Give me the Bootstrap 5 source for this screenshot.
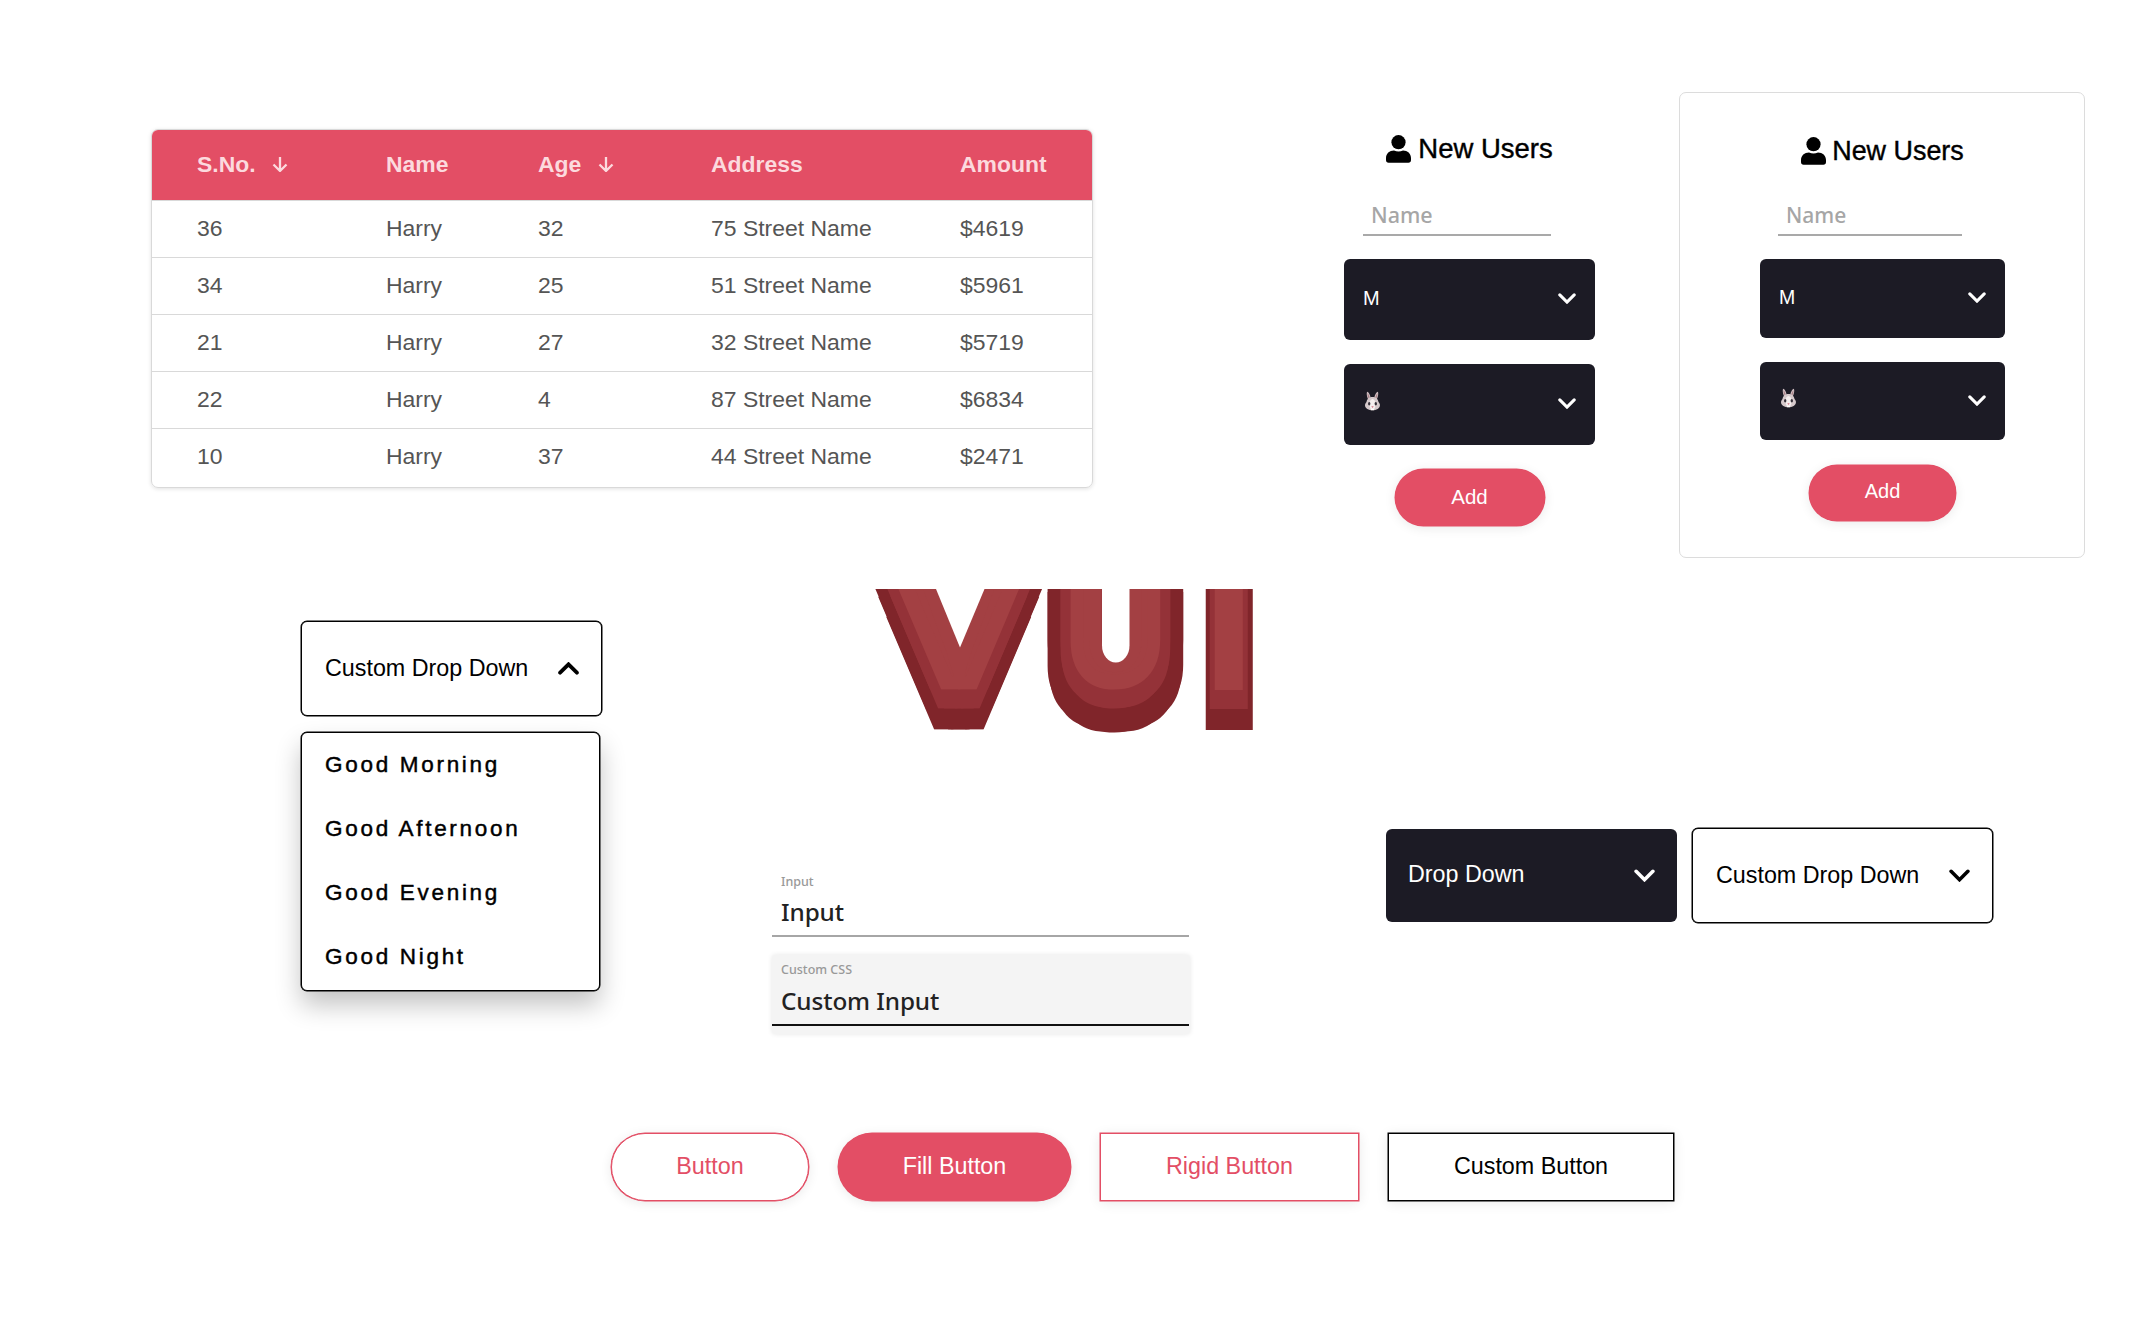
<!DOCTYPE html>
<html lang="en">
<head>
<meta charset="utf-8">
<meta name="viewport" content="width=device-width, initial-scale=1">
<title>VUI components</title>
<link href="https://cdn.jsdelivr.net/npm/bootstrap@5.3.0/dist/css/bootstrap.min.css" rel="stylesheet">
<style>
  :root { --rose: #e34e65; --ink: #1c1b25; }
  body { background: #fff; color: #000; font: 23.3px/1.2 "Liberation Sans", Arial, sans-serif; overflow: hidden; }
  .showcase { width: 2136px; height: 1320px; overflow: hidden; }
  .band-top { height: 589px; }
  .band-mid { height: 544px; }

  /* data table */
  .grid-box { width: 942px; height: 359px; margin: 129px 0 0 151px; border: 1px solid #d9d9d9; border-radius: 7px; box-shadow: 0 1px 4px rgba(0,0,0,.12); }
  .vui-table { --bs-table-bg: transparent; --bs-table-color: #555; table-layout: fixed; font-size: 22.95px; line-height: 27px; }
  .vui-table > :not(caption) > * > * { padding: 0 0 1px; height: 57px; border-bottom: 1px solid #d9d9d9; vertical-align: middle; color: #555; }
  .vui-table > thead > tr > th { height: 70px; background: var(--rose); color: #fcdade; border-bottom-width: 1px; }
  .vui-table > tbody > tr:last-child > td { border-bottom: 0; }
  .vui-table > :not(caption) > * > :first-child { padding-left: 45px; }
  .vui-table svg { margin: -3px 0 0 10px; }

  /* new user form */
  .user-form { width: 251px; margin: 132px 0 0 251px; }
  .user-title { font-size: 27.5px; line-height: 34px; -webkit-text-stroke: .4px #000; margin-bottom: 36px; gap: 7px; }
  .user-name { width: 188px; height: 34px; margin: 0 0 23px 19px; padding: 0 0 7px 8px; border: 0; border-bottom: 2px solid #a9a9a9; border-radius: 0; font: 500 21.5px/25px "Noto Sans", sans-serif; color: #a6a6a6; background: none; }
  .user-name::placeholder { color: #a6a6a6; opacity: 1; }
  .pick { height: 80.5px; background: var(--ink); color: #fff; border: 0; border-radius: 6px; padding: 0 19px 2px; font-size: 20px; line-height: 24px; margin-bottom: 24.5px; }
  .pick svg.rabbit { margin: -4px 0 0 1px; }
  .form-panel { width: 406px; height: 466px; margin: 92px 0 0 84px; border: 1px solid #dcdcdc; border-radius: 7px; padding: 41px 79px 0 80px; }
  .form-panel .user-form { width: 245px; margin: 0; }
  .form-panel .user-title { font-size: 26.9px; margin-bottom: 34px; gap: 6px; }
  .form-panel .user-name { width: 184px; margin-left: 18px; font-size: 21px; }
  .form-panel .pick { height: 78.5px; font-size: 19.5px; margin-bottom: 24.300px; }

  /* buttons */
  .vbtn { --bs-btn-font-size: 23.3px; --bs-btn-border-radius: 0; --bs-btn-bg: #fff; height: 68px; padding: 0 0 1px; box-shadow: 0 0 0 .5px var(--bs-btn-border-color), 0 2px 12px rgba(0,0,0,.09); --bs-btn-color: var(--rose); --bs-btn-border-color: var(--rose); --bs-btn-border-width: 1px; font-family: inherit; }
  .vbtn.filled { --bs-btn-bg: var(--rose); --bs-btn-color: #fff; }
  .vbtn.dark-line { --bs-btn-color: #000; --bs-btn-border-color: #000; }
  .vbtn.add-btn { width: 150px; height: 57px; font-size: 20.5px; padding: 0 0 1px; }
  .form-panel .vbtn.add-btn { width: 147px; height: 56px; font-size: 20px; padding-bottom: 3px; }
  .btn-strip { padding-left: 611px; gap: 29px; }

  /* dropdowns */
  .select-box { height: 95px; border: 1px solid #000; box-shadow: 0 0 0 .5px #000; border-radius: 6px; background: #fff; padding: 0 22px 0 23px; color: #000; font-size: 23.3px; }
  .select-box.solid { height: 93px; background: var(--ink); border: 0; box-shadow: none; color: #fff; padding: 0 22px 1px; }
  .select-col { width: 301px; margin: 32px 0 0 301px; }
  .select-menu { width: 299px; height: 259px; margin-top: 16px; border: 1px solid #000; border-radius: 6px; background: #fff; box-shadow: 0 0 0 .5px #000, 0 14px 26px rgba(0,0,0,.24); }
  .select-menu li { height: 64px; line-height: 63px; padding-left: 23px; font-size: 22.5px; letter-spacing: 2.7px; -webkit-text-stroke: .45px #000; }

  /* wordmark and inputs */
  .mid-col { width: 420px; margin-left: 170px; }
  .wordmark { overflow: visible; margin: -60px 0 135px 100px; font: bold 100px "Liberation Sans", Arial, sans-serif; text-anchor: middle; }
  .wordmark text { vector-effect: non-scaling-stroke; stroke-linejoin: miter; stroke-miterlimit: 10; fill: #a34043; stroke: #a34043; }
  .field { width: 417px; height: 68px; border-bottom: 2px solid #a6a6a6; padding: 3px 0 0 9px; font-family: "Noto Sans", sans-serif; color: #222; }
  .field-label { font-size: 12.5px; line-height: 20px; color: #999; font-weight: 500; }
  .field-value { font: 500 24.3px/32px "Noto Sans", sans-serif; margin-top: 4px; letter-spacing: -.1px; color: #222; }
  .field-wrap { width: 418px; height: 79px; margin-top: 18px; background: #f4f4f4; border-radius: 3px; box-shadow: 0 0 5px rgba(0,0,0,.1); }
  .field-wrap .field { height: 71px; padding-top: 5px; border-color: #111; }
  .field-wrap .field-value { margin-top: 5px; }
  .right-pair { margin: 239px 0 0 194px; gap: 15px; }
</style>
</head>
<body>
<svg width="0" height="0" class="position-absolute" aria-hidden="true">
  <symbol id="chev" viewBox="0 0 20 12"><path d="M2 2l8 8 8-8" fill="none" stroke="currentColor" stroke-width="3.4" stroke-linecap="round" stroke-linejoin="miter"/></symbol>
  <symbol id="sort" viewBox="0 0 16 16"><path d="M8 1v13M1.5 8.5L8 15l6.5-6.5" fill="none" stroke="currentColor" stroke-width="2.3" stroke-linejoin="round"/></symbol>
  <symbol id="person" viewBox="0 0 25 28"><circle cx="12.5" cy="7.2" r="7.1"/><path d="M0 25v-2c0-4.500 3.500-7.500 8-7.500 3 1.200 6 1.200 9 0 4.500 0 8 3 8 7.500v2c0 1.700-1 2.800-2.600 2.800H2.600C1 27.800 0 26.700 0 25z"/></symbol>
  <symbol id="bunny" viewBox="0 0 17 20">
    <path d="M4.600 9C2.800 6 2.300 2 3.200.700 4.800 1 6.600 4.500 6.800 8zM12.400 9c1.800-3 2.300-7 1.400-8.300-1.600.300-3.400 3.800-3.600 7.300z" fill="#cdbcbf"/>
    <path d="M4.700 7.500C3.700 5 3.500 3.500 3.700 2.500c1 1 1.800 3 2.100 5zM12.300 7.500c1-2.500 1.200-4 1-5-1 1-1.800 3-2.100 5z" fill="#a87f86"/>
    <path d="M8.500 6c3.700 0 5.500 2.300 6 5 2.400 2.500 1.700 5.300-.800 7-3 1.800-7.400 1.800-10.400 0C.800 16.300.100 13.500 2.500 11c.500-2.700 2.300-5 6-5z" fill="#d5c9cb"/>
    <ellipse cx="8.500" cy="13.500" rx="3" ry="5.500" fill="#f5efef"/>
    <ellipse cx="5.200" cy="12.700" rx="1.200" ry="1.700" fill="#353039"/><ellipse cx="11.800" cy="12.700" rx="1.200" ry="1.700" fill="#353039"/>
    <path d="M7.300 15.300h2.400l-1.200 1.700z" fill="#cf6f80"/><path d="M7 18h3v1.200H7z" fill="#fff"/>
  </symbol>
</svg>

<main class="showcase d-flex flex-column">
  <section class="band-top d-flex align-items-start">
    <div class="grid-box overflow-hidden flex-shrink-0">
      <table class="table vui-table mb-0 w-100">
        <colgroup><col style="width:234px"><col style="width:152px"><col style="width:173px"><col style="width:249px"><col></colgroup>
        <thead><tr><th>S.No. <svg width="16" height="16"><use href="#sort"/></svg></th><th>Name</th><th>Age <svg width="16" height="16"><use href="#sort"/></svg></th><th>Address</th><th>Amount</th></tr></thead>
        <tbody>
          <tr><td>36</td><td>Harry</td><td>32</td><td>75 Street Name</td><td>$4619</td></tr>
          <tr><td>34</td><td>Harry</td><td>25</td><td>51 Street Name</td><td>$5961</td></tr>
          <tr><td>21</td><td>Harry</td><td>27</td><td>32 Street Name</td><td>$5719</td></tr>
          <tr><td>22</td><td>Harry</td><td>4</td><td>87 Street Name</td><td>$6834</td></tr>
          <tr><td>10</td><td>Harry</td><td>37</td><td>44 Street Name</td><td>$2471</td></tr>
        </tbody>
      </table>
    </div>

    <div class="user-form d-flex flex-column flex-shrink-0">
      <div class="user-title d-flex justify-content-center align-items-center"><svg width="25" height="28"><use href="#person"/></svg><span>New Users</span></div>
      <input class="user-name" placeholder="Name" aria-label="Name">
      <button class="pick d-flex justify-content-between align-items-center"><span>M</span><svg width="18" height="11"><use href="#chev"/></svg></button>
      <button class="pick d-flex justify-content-between align-items-center"><svg class="rabbit" width="17" height="20"><use href="#bunny"/></svg><svg width="18" height="11"><use href="#chev"/></svg></button>
      <button class="btn vbtn filled add-btn rounded-pill align-self-center">Add</button>
    </div>

    <div class="form-panel flex-shrink-0">
      <div class="user-form d-flex flex-column">
        <div class="user-title d-flex justify-content-center align-items-center"><svg width="25" height="28"><use href="#person"/></svg><span>New Users</span></div>
        <input class="user-name" placeholder="Name" aria-label="Name">
        <button class="pick d-flex justify-content-between align-items-center"><span>M</span><svg width="18" height="11"><use href="#chev"/></svg></button>
        <button class="pick d-flex justify-content-between align-items-center"><svg class="rabbit" width="17" height="20"><use href="#bunny"/></svg><svg width="18" height="11"><use href="#chev"/></svg></button>
        <button class="btn vbtn filled add-btn rounded-pill align-self-center">Add</button>
      </div>
    </div>
  </section>

  <section class="band-mid d-flex align-items-start">
    <div class="select-col flex-shrink-0">
      <button class="select-box w-100 d-flex justify-content-between align-items-center"><span>Custom Drop Down</span><svg width="21" height="13" viewBox="0 0 20 12"><path d="M2 10l8-8 8 8" fill="none" stroke="#000" stroke-width="3.600" stroke-linecap="round"/></svg></button>
      <ul class="select-menu list-unstyled mb-0">
        <li>Good Morning</li><li>Good Afternoon</li><li>Good Evening</li><li>Good Night</li>
      </ul>
    </div>

    <div class="mid-col flex-shrink-0">
      <svg class="wordmark d-block" width="385" height="205" viewBox="872 529.500 385 205" role="img" aria-label="VUI">
        <!-- each filter stacks two darker offset tones behind its letter -->
        <defs>
          <clipPath id="flatBase"><rect x="860" y="500" width="400" height="190"/></clipPath>
          <filter id="toneV" filterUnits="userSpaceOnUse" x="860" y="500" width="400" height="240" color-interpolation-filters="sRGB">
            <feOffset in="SourceAlpha" dx="-23" dy="0" result="a1"/><feOffset in="SourceAlpha" dx="23" dy="0" result="a2"/>
            <feOffset in="SourceAlpha" dx="-15" dy="20" result="a3"/><feOffset in="SourceAlpha" dx="15" dy="20" result="a4"/>
            <feOffset in="SourceAlpha" dx="-7" dy="40" result="a5"/><feOffset in="SourceAlpha" dx="7" dy="40" result="a6"/>
            <feMerge result="am"><feMergeNode in="a1"/><feMergeNode in="a2"/><feMergeNode in="a3"/><feMergeNode in="a4"/><feMergeNode in="a5"/><feMergeNode in="a6"/></feMerge>
            <feFlood flood-color="#80252a"/><feComposite in2="am" operator="in" result="dark"/>
            <feOffset in="SourceAlpha" dx="-11" dy="0" result="b1"/><feOffset in="SourceAlpha" dx="11" dy="0" result="b2"/>
            <feOffset in="SourceAlpha" dx="-3" dy="19" result="b3"/><feOffset in="SourceAlpha" dx="3" dy="19" result="b4"/>
            <feMerge result="bm"><feMergeNode in="b1"/><feMergeNode in="b2"/><feMergeNode in="b3"/><feMergeNode in="b4"/></feMerge>
            <feFlood flood-color="#943238"/><feComposite in2="bm" operator="in" result="mid"/>
            <feMerge><feMergeNode in="dark"/><feMergeNode in="mid"/><feMergeNode in="SourceGraphic"/></feMerge>
          </filter>
          <filter id="toneU" filterUnits="userSpaceOnUse" x="860" y="500" width="400" height="240" color-interpolation-filters="sRGB">
            <feOffset in="SourceAlpha" dx="-23" dy="0" result="a1"/><feOffset in="SourceAlpha" dx="23" dy="0" result="a2"/>
            <feOffset in="SourceAlpha" dx="-23" dy="25" result="a3"/><feOffset in="SourceAlpha" dx="23" dy="25" result="a4"/>
            <feOffset in="SourceAlpha" dx="-21.300" dy="31.700" result="a5"/><feOffset in="SourceAlpha" dx="21.300" dy="31.700" result="a6"/>
            <feOffset in="SourceAlpha" dx="-16.300" dy="37.700" result="a7"/><feOffset in="SourceAlpha" dx="16.300" dy="37.700" result="a8"/>
            <feOffset in="SourceAlpha" dx="-9" dy="41.600" result="a9"/><feOffset in="SourceAlpha" dx="9" dy="41.600" result="a10"/>
            <feOffset in="SourceAlpha" dx="0" dy="43" result="a11"/>
            <feMerge result="am"><feMergeNode in="a1"/><feMergeNode in="a2"/><feMergeNode in="a3"/><feMergeNode in="a4"/><feMergeNode in="a5"/><feMergeNode in="a6"/><feMergeNode in="a7"/><feMergeNode in="a8"/><feMergeNode in="a9"/><feMergeNode in="a10"/><feMergeNode in="a11"/></feMerge>
            <feFlood flood-color="#80252a"/><feComposite in2="am" operator="in" result="dark"/>
            <feOffset in="SourceAlpha" dx="-10" dy="0" result="b1"/><feOffset in="SourceAlpha" dx="10" dy="0" result="b2"/>
            <feOffset in="SourceAlpha" dx="-10" dy="9" result="b3"/><feOffset in="SourceAlpha" dx="10" dy="9" result="b4"/>
            <feOffset in="SourceAlpha" dx="-8.700" dy="14" result="b5"/><feOffset in="SourceAlpha" dx="8.700" dy="14" result="b6"/>
            <feOffset in="SourceAlpha" dx="-5" dy="17.700" result="b7"/><feOffset in="SourceAlpha" dx="5" dy="17.700" result="b8"/>
            <feOffset in="SourceAlpha" dx="0" dy="19" result="b9"/>
            <feMerge result="bm"><feMergeNode in="b1"/><feMergeNode in="b2"/><feMergeNode in="b3"/><feMergeNode in="b4"/><feMergeNode in="b5"/><feMergeNode in="b6"/><feMergeNode in="b7"/><feMergeNode in="b8"/><feMergeNode in="b9"/></feMerge>
            <feFlood flood-color="#943238"/><feComposite in2="bm" operator="in" result="mid"/>
            <feMerge><feMergeNode in="dark"/><feMergeNode in="mid"/><feMergeNode in="SourceGraphic"/></feMerge>
          </filter>
          <filter id="toneI" filterUnits="userSpaceOnUse" x="860" y="500" width="400" height="240" color-interpolation-filters="sRGB">
            <feOffset in="SourceAlpha" dx="-9.500" dy="40" result="a1"/><feOffset in="SourceAlpha" dx="10" dy="40" result="a2"/>
            <feMerge result="am"><feMergeNode in="a1"/><feMergeNode in="a2"/></feMerge>
            <feFlood flood-color="#80252a"/><feComposite in2="am" operator="in" result="dark"/>
            <feOffset in="SourceAlpha" dx="-5" dy="19" result="b1"/><feOffset in="SourceAlpha" dx="5" dy="19" result="b2"/>
            <feMerge result="bm"><feMergeNode in="b1"/><feMergeNode in="b2"/></feMerge>
            <feFlood flood-color="#943238"/><feComposite in2="bm" operator="in" result="mid"/>
            <feMerge><feMergeNode in="dark"/><feMergeNode in="mid"/><feMergeNode in="SourceGraphic"/></feMerge>
          </filter>
        </defs>
        <g filter="url(#toneV)"><g clip-path="url(#flatBase)"><text transform="translate(958.800 683.200) scale(1.663 1.450)" stroke-width="14.600">V</text></g></g>
        <g filter="url(#toneU)"><text transform="translate(1115.500 681.500) scale(1.280 1.536)" stroke-width="14">U</text></g>
        <g filter="url(#toneI)"><text transform="translate(1228.700 690) scale(1.944 2.100)" stroke-width="0">I</text></g>
        <!-- open counters and the flat top edge -->
        <path d="M936 589.500h48.500L960 648z" fill="#fff"/>
        <rect x="1102" y="560" width="27.500" height="103" rx="13.700" ry="17" fill="#fff"/>
        <rect x="860" y="515" width="400" height="74.500" fill="#fff"/>
      </svg>
      <div class="field">
        <div class="field-label">Input</div>
        <div class="field-value">Input</div>
      </div>
      <div class="field-wrap">
        <div class="field">
          <div class="field-label">Custom CSS</div>
          <div class="field-value">Custom Input</div>
        </div>
      </div>
    </div>

    <div class="right-pair d-flex align-items-center flex-shrink-0">
      <button class="select-box solid d-flex justify-content-between align-items-center" style="width:291px"><span>Drop Down</span><svg width="21" height="13"><use href="#chev"/></svg></button>
      <button class="select-box d-flex justify-content-between align-items-center" style="width:301px"><span>Custom Drop Down</span><svg width="21" height="13"><use href="#chev"/></svg></button>
    </div>
  </section>

  <section class="btn-strip d-flex">
    <button class="btn vbtn rounded-pill" style="width:198px">Button</button>
    <button class="btn vbtn filled rounded-pill" style="width:233px">Fill Button</button>
    <button class="btn vbtn" style="width:259px">Rigid Button</button>
    <button class="btn vbtn dark-line" style="width:286px">Custom Button</button>
  </section>
</main>
<script src="https://cdn.jsdelivr.net/npm/bootstrap@5.3.0/dist/js/bootstrap.bundle.min.js"></script>
</body>
</html>
